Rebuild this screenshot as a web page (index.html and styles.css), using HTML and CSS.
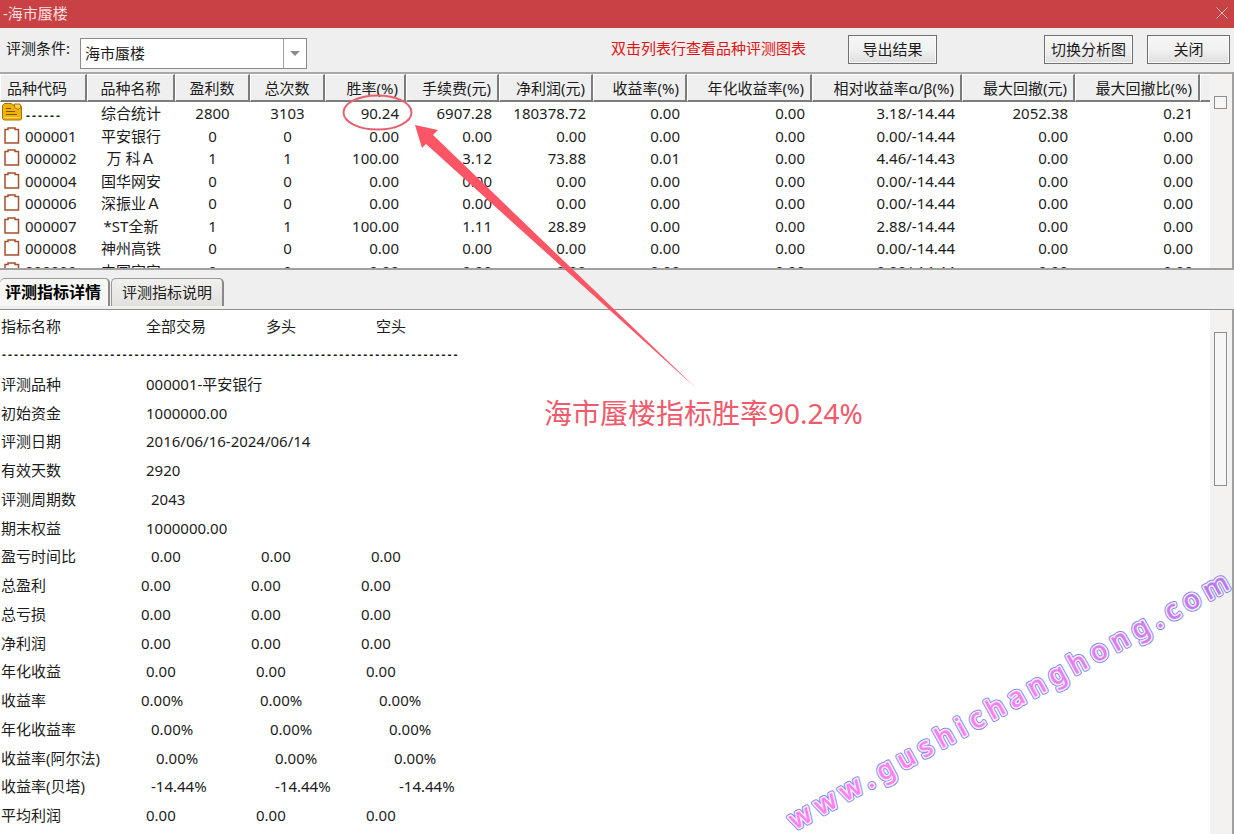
FILE: index.html
```html
<!DOCTYPE html>
<html lang="zh-CN">
<head>
<meta charset="utf-8">
<title>海市蜃楼</title>
<link rel="stylesheet" href="styles.css">
</head>
<body>
<svg class="defs" width="0" height="0" aria-hidden="true">
  <symbol id="doc" viewBox="0 0 20 20"><path d="M3 4.500h3v-1.500h7v1.500h3.500v13.500h-13.500z" fill="#fff" stroke="#a4502c" stroke-width="1.500"/></symbol>
</svg>
<div class="window">
  <header class="titlebar">
    <h1>-海市蜃楼</h1>
    <button class="x" aria-label="关闭窗口"><svg width="12" height="12" viewBox="0 0 12 12"><path d="M0.500 0.500l11 11M11.500 0.500l-11 11" stroke="#f0b4b4" fill="none"/></svg></button>
  </header>
  <div class="toolbar">
    <label for="cond">评测条件:</label>
    <div class="combo">
      <select id="cond"><option>海市蜃楼</option></select>
      <span class="combo-arrow"></span>
    </div>
    <p class="hint">双击列表行查看品种评测图表</p>
    <button class="btn">导出结果</button>
    <button class="btn push">切换分析图</button>
    <button class="btn close">关闭</button>
  </div>
  <section class="pane list">
    <div class="clip">
    <table class="grid">
      <colgroup><col class="c87"><col class="c88"><col class="c75"><col class="c75"><col class="c81"><col class="c93"><col class="c94"><col class="c94"><col class="c125"><col class="c150"><col class="c113"><col class="c125"><col></colgroup>
      <thead><tr><th>品种代码</th><th>品种名称</th><th>盈利数</th><th>总次数</th><th>胜率(%)</th><th>手续费(元)</th><th>净利润(元)</th><th>收益率(%)</th><th>年化收益率(%)</th><th>相对收益率α/β(%)</th><th>最大回撤(元)</th><th>最大回撤比(%)</th><th></th></tr></thead>
      <tbody>
        <tr><td><svg class="ico" viewBox="0 0 20 20"><path d="M0.500 3.500l2-2h7l1 1.500h7.500l1.500 1.500v12.500l-1 1h-16.500l-1.500-1.500z" fill="#eeb208" stroke="#a87400"/><path d="M12.500 2h5.500l1 3.500-3 2-3.500-2z" fill="#ffd23c" stroke="#a87400"/><path d="M4 6.500h5M4 9.500h9M4 12.500h11" stroke="#7a5600" fill="none"/><path d="M2 15.500h15.500" stroke="#ffdc50" fill="none"/></svg><span class="dash">------</span></td><td>综合统计</td><td>2800</td><td>3103</td><td>90.24</td><td>6907.28</td><td>180378.72</td><td>0.00</td><td>0.00</td><td>3.18/-14.44</td><td>2052.38</td><td>0.21</td><td></td></tr>
        <tr><td><svg class="ico"><use href="#doc"/></svg>000001</td><td>平安银行</td><td>0</td><td>0</td><td>0.00</td><td>0.00</td><td>0.00</td><td>0.00</td><td>0.00</td><td>0.00/-14.44</td><td>0.00</td><td>0.00</td><td></td></tr>
        <tr><td><svg class="ico"><use href="#doc"/></svg>000002</td><td>万 科Ａ</td><td>1</td><td>1</td><td>100.00</td><td>3.12</td><td>73.88</td><td>0.01</td><td>0.00</td><td>4.46/-14.43</td><td>0.00</td><td>0.00</td><td></td></tr>
        <tr><td><svg class="ico"><use href="#doc"/></svg>000004</td><td>国华网安</td><td>0</td><td>0</td><td>0.00</td><td>0.00</td><td>0.00</td><td>0.00</td><td>0.00</td><td>0.00/-14.44</td><td>0.00</td><td>0.00</td><td></td></tr>
        <tr><td><svg class="ico"><use href="#doc"/></svg>000006</td><td>深振业Ａ</td><td>0</td><td>0</td><td>0.00</td><td>0.00</td><td>0.00</td><td>0.00</td><td>0.00</td><td>0.00/-14.44</td><td>0.00</td><td>0.00</td><td></td></tr>
        <tr><td><svg class="ico"><use href="#doc"/></svg>000007</td><td>*ST全新</td><td>1</td><td>1</td><td>100.00</td><td>1.11</td><td>28.89</td><td>0.00</td><td>0.00</td><td>2.88/-14.44</td><td>0.00</td><td>0.00</td><td></td></tr>
        <tr><td><svg class="ico"><use href="#doc"/></svg>000008</td><td>神州高铁</td><td>0</td><td>0</td><td>0.00</td><td>0.00</td><td>0.00</td><td>0.00</td><td>0.00</td><td>0.00/-14.44</td><td>0.00</td><td>0.00</td><td></td></tr>
        <tr><td><svg class="ico"><use href="#doc"/></svg>000009</td><td>中国宝安</td><td>0</td><td>0</td><td>0.00</td><td>0.00</td><td>0.00</td><td>0.00</td><td>0.00</td><td>0.00/-14.44</td><td>0.00</td><td>0.00</td><td></td></tr>
      </tbody>
    </table>
    </div>
    <div class="scroll"><div class="thumb small"></div></div>
  </section>
  <nav class="tabs">
    <button class="tab on">评测指标详情</button>
    <button class="tab">评测指标说明</button>
  </nav>
  <section class="pane detail">
    <div class="clip">
    <table class="report">
      <tbody>
      <tr class="head"><th>指标名称</th><td>全部交易</td><td>多头</td><td>空头</td></tr>
      <tr><td class="rule dash">----------------------------------------------------------------------------</td></tr>
      <tr><th>评测品种</th><td>000001-平安银行</td></tr>
      <tr><th>初始资金</th><td>1000000.00</td></tr>
      <tr><th>评测日期</th><td>2016/06/16-2024/06/14</td></tr>
      <tr><th>有效天数</th><td>2920</td></tr>
      <tr class="l5"><th>评测周期数</th><td>2043</td></tr>
      <tr><th>期末权益</th><td>1000000.00</td></tr>
      <tr class="l5"><th>盈亏时间比</th><td>0.00</td><td>0.00</td><td>0.00</td></tr>
      <tr class="l3"><th>总盈利</th><td>0.00</td><td>0.00</td><td>0.00</td></tr>
      <tr class="l3"><th>总亏损</th><td>0.00</td><td>0.00</td><td>0.00</td></tr>
      <tr class="l3"><th>净利润</th><td>0.00</td><td>0.00</td><td>0.00</td></tr>
      <tr><th>年化收益</th><td>0.00</td><td>0.00</td><td>0.00</td></tr>
      <tr class="l3 pct"><th>收益率</th><td>0.00%</td><td>0.00%</td><td>0.00%</td></tr>
      <tr class="l5 pct"><th>年化收益率</th><td>0.00%</td><td>0.00%</td><td>0.00%</td></tr>
      <tr class="l6 pct"><th>收益率(阿尔法)</th><td>0.00%</td><td>0.00%</td><td>0.00%</td></tr>
      <tr class="l5 neg"><th>收益率(贝塔)</th><td>-14.44%</td><td>-14.44%</td><td>-14.44%</td></tr>
      <tr><th>平均利润</th><td>0.00</td><td>0.00</td><td>0.00</td></tr>
      </tbody>
    </table>
    </div>
    <div class="scroll"><div class="thumb tall"></div></div>
  </section>
  <svg class="notes" width="1234" height="834" viewBox="0 0 1234 834">
    <defs>
      <linearGradient id="ink" x1="0" x2="1"><stop offset="0" stop-color="#ff7fee"/><stop offset="0.500" stop-color="#fb7ff2"/><stop offset="1" stop-color="#b57aee"/></linearGradient>
      <text id="mark" class="mark">www.gushichanghong.com</text>
    </defs>
    <ellipse cx="377.500" cy="112.500" rx="34" ry="17" fill="none" stroke="#e8606e" stroke-width="2"/>
    <path d="M415 125l23 5-5 5L697 389 426 144l-4 4z" fill="#fc5565"/>
    <text class="callout" x="544" y="424">海市蜃楼指标胜率90.24%</text>
    <g transform="translate(795 830) rotate(-29)">
      <use href="#mark" fill="none" stroke="#8587ea" stroke-width="5"/>
      <use href="#mark" fill="none" stroke="#f4eefc" stroke-width="3"/>
      <use href="#mark" fill="url(#ink)"/>
    </g>
  </svg>
</div>
</body>
</html>
```
FILE: styles.css
```css
* { box-sizing: border-box; }
body {
  margin: 0;
  background: #efefef;
  color: #1c1c1c;
  font: 15px/22px "Noto Sans", "Noto Sans CJK SC", sans-serif;
}
button, select { font: inherit; color: inherit; }
.defs { position: absolute; }
.window {
  position: relative;
  display: flex;
  flex-direction: column;
  height: 100vh;
  overflow: hidden;
}
.titlebar {
  display: flex;
  justify-content: space-between;
  align-items: center;
  flex: none;
  height: 28px;
  padding: 0 6px 2px 3px;
  background: #c84144;
}
h1 { margin: 0; font-size: 15px; font-weight: 400; color: #f8dede; }
.x { display: flex; padding: 0; border: 0; background: none; }

.toolbar {
  display: flex;
  align-items: flex-start;
  flex: none;
  height: 44px;
  padding: 7px 4px 0 6px;
}
.toolbar label { width: 74px; padding-top: 2px; }
.combo {
  display: flex;
  position: relative;
  width: 227px;
  height: 31px;
  margin-top: 3px;
}
.combo select {
  appearance: none;
  width: 100%;
  padding: 0 28px 2px 4px;
  border: 1px solid #8a8a8a;
  border-radius: 0;
  background: #fff;
}
.combo-arrow {
  position: absolute;
  right: 1px;
  top: 1px;
  bottom: 1px;
  width: 23px;
  border-left: 1px solid #a0a0a0;
  pointer-events: none;
}
.combo-arrow::after {
  content: "";
  position: absolute;
  left: 6px;
  top: 12px;
  border: 5px solid transparent;
  border-top-color: #8c8c8c;
  border-bottom: 0;
}
.hint { margin: 2px 42px 0 304px; color: #e01414; white-space: nowrap; }
.btn {
  width: 89px;
  height: 29px;
  padding: 0 0 2px;
  border: 1px solid #707070;
  background: linear-gradient(#f6f6f6, #f1f1f1 50%, #dedede);
  box-shadow: inset 0 0 0 1px #fafafa;
  white-space: nowrap;
}
.push { margin-left: auto; }
.close { width: 83px; margin-left: 14px; }

.pane {
  display: flex;
  background: #fff;
  border-top: 1px solid #8e8e8e;
  border-right: 2px solid #a0a0a0;
}
.clip { flex: 1; min-width: 0; overflow: hidden; }
.list { flex: none; height: 198px; border-bottom: 2px solid #a0a0a0; border-top: 2px solid #a8a8a8; }
.scroll { flex: none; width: 22px; background: #f3f2f1; padding-left: 4px; }
.thumb { width: 13px; border: 1px solid #8e8e8e; background: #f6f6f6; }
.small { height: 13px; margin-top: 22px; }
.tall { height: 154px; margin-top: 22px; }

.grid { width: 100%; table-layout: fixed; border-collapse: separate; border-spacing: 0; white-space: nowrap; }
.c75 { width: 75px; }
.c81 { width: 81px; }
.c87 { width: 87px; }
.c88 { width: 88px; }
.c93 { width: 93px; }
.c94 { width: 94px; }
.c113 { width: 113px; }
.c125 { width: 125px; }
.c150 { width: 150px; }
.grid th {
  height: 28px;
  padding: 0 6px 0 0;
  font-weight: 400;
  text-align: right;
  background: #efefef;
  border-top: 1px solid #fff;
  border-left: 1px solid #fff;
  border-right: 2px solid #7c7c7c;
  border-bottom: 2px solid #7c7c7c;
}
.grid td { height: 23px; padding: 0 7px 0 0; line-height: 22px; text-align: right; vertical-align: top; }
.grid tr:nth-child(even) td { height: 22px; }
.grid th:nth-child(-n+4), .grid td:nth-child(-n+4) { text-align: center; padding-right: 0; }
.grid tr > :first-child { text-align: left; }
.grid th:first-child { padding-left: 6px; }
.grid th:last-child { border-right: 0; }
.grid td:first-child { padding-left: 2px; }
.ico { width: 20px; height: 20px; margin-right: 3px; vertical-align: top; }
.dash { font-family: "DejaVu Sans Mono", monospace; font-size: 10px; font-weight: 700; }
.grid .dash { line-height: 10px; }

.tabs {
  display: flex;
  align-items: flex-start;
  flex: none;
  gap: 1px;
  height: 39px;
  padding-top: 8px;
}
.tab {
  width: 113px;
  height: 28px;
  padding: 0 0 1px;
  border: 1px solid #9a9a9a;
  border-right: 2px solid #8a8a8a;
  border-bottom: 0;
  border-radius: 5px 5px 0 0;
  background: linear-gradient(#f0f0ee, #e2e1de);
}
.tab.on { width: 110px; padding-right: 2px; border-left: 0; background: #f6f6f4; color: #000; font-weight: 700; font-size: 16px; }

.detail { flex: 1; min-height: 0; }
.report { display: block; padding: 2px 0 0 1px; white-space: nowrap; }
.report tbody { display: block; }
.report tr { display: flex; height: 29px; line-height: 28px; }
.report tr:nth-child(4n) { height: 28px; }
.report th { width: 145px; padding: 0; font-weight: 400; text-align: left; }
.report td { width: 110px; padding: 0; }
.report .l3 th { width: 140px; }
.report .l5 th { width: 150px; }
.report .l6 th { width: 155px; }
.report .pct td { width: 119px; }
.report .neg td { width: 124px; }
.report .head td:nth-child(2) { width: 120px; }

.notes { position: absolute; left: 0; top: 0; pointer-events: none; }
.callout { font-size: 28px; fill: #ee5b6c; }
.mark { font-size: 27px; font-weight: 500; letter-spacing: 7px; stroke-linejoin: round; }
```
